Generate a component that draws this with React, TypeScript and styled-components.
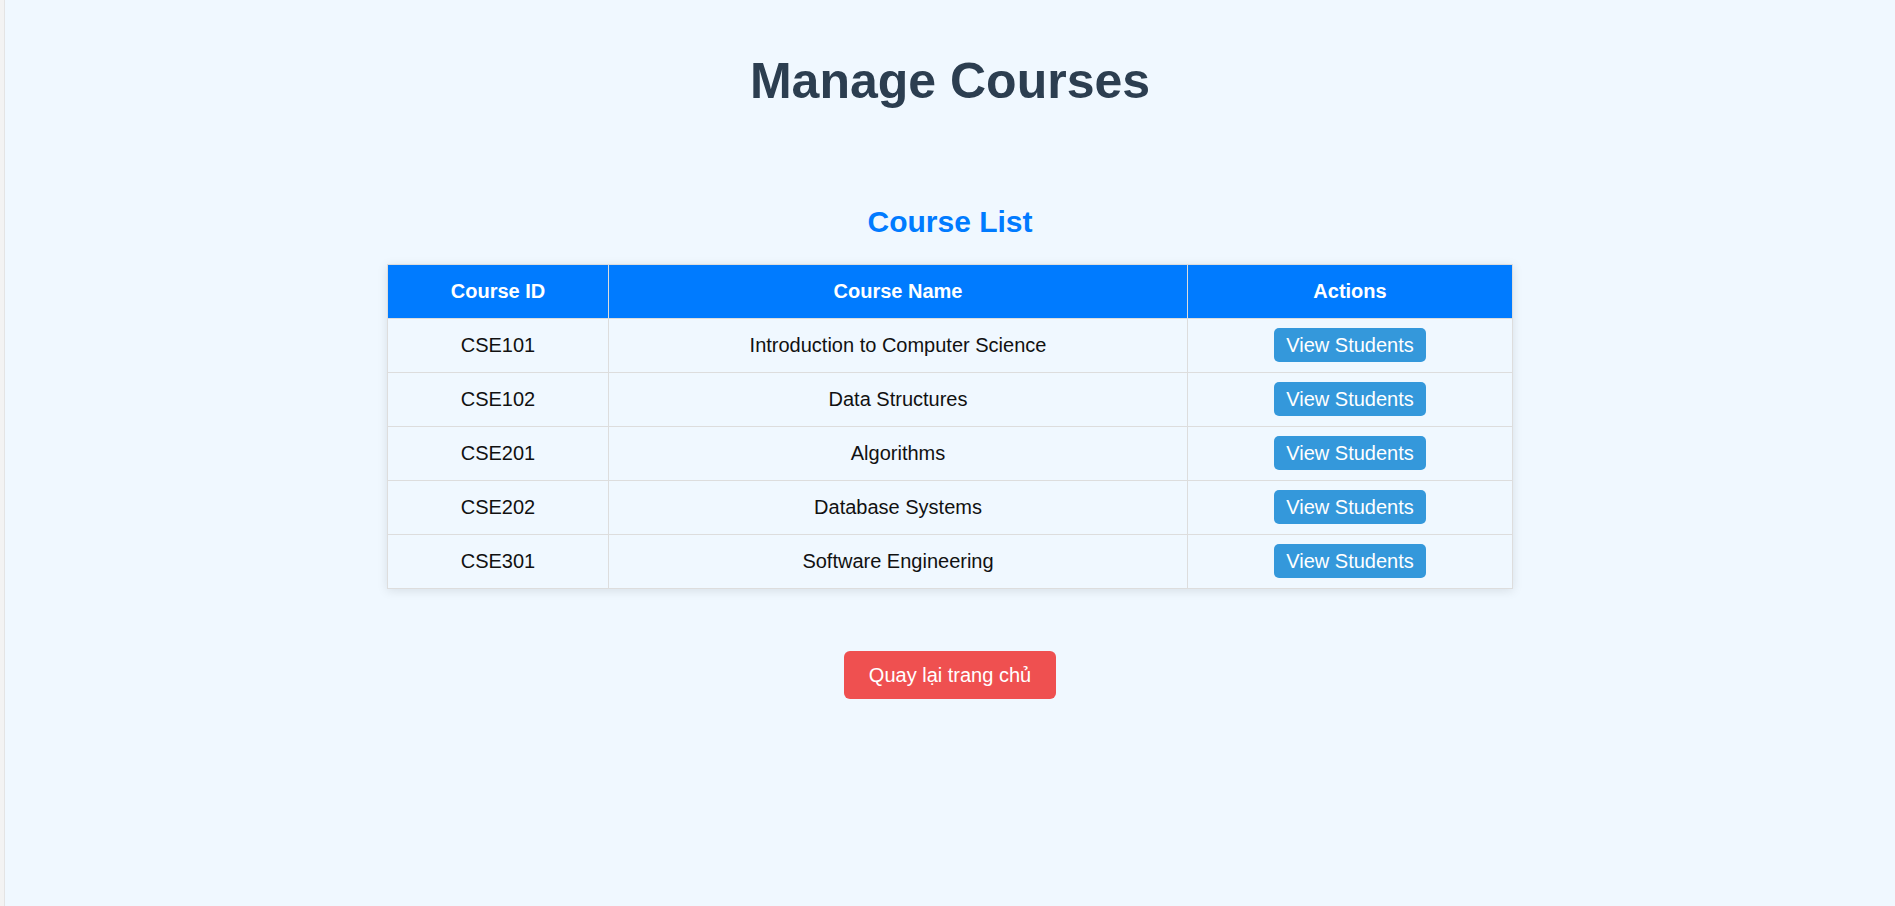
import React from "react";
import styled, { createGlobalStyle } from "styled-components";

const GlobalStyle = createGlobalStyle`
  html, body {
    margin: 0;
    padding: 0;
    background: #f0f8ff;
    font-family: "Liberation Sans", Arial, sans-serif;
  }
  #root {
    min-height: 906px;
  }
`;

const Shell = styled.div`
  display: flex;
  min-height: 906px;
`;

const EdgeStrip = styled.div`
  width: 4px;
  flex: 0 0 4px;
  background: #f3f3f3;
  border-right: 1px solid #e4e4e4;
`;

const Main = styled.main`
  flex: 1;
  display: flex;
  flex-direction: column;
  align-items: center;
  background: #f0f8ff;
`;

const Title = styled.h1`
  margin: 52px 0 0;
  font-size: 50px;
  line-height: 58px;
  font-weight: 700;
  color: #2c3e50;
`;

const SectionTitle = styled.h2`
  margin: 95px 0 25px;
  font-size: 30px;
  line-height: 34px;
  font-weight: 700;
  color: #007bff;
`;

const Table = styled.table`
  width: 1125px;
  table-layout: fixed;
  border-collapse: collapse;
  border: 1px solid #ddd;
  box-shadow: 0 2px 10px rgba(0, 0, 0, 0.1);
  background: #f0f8ff;
`;

const HeadCell = styled.th<{ $w: number }>`
  box-sizing: border-box;
  width: ${(p) => p.$w}px;
  background: #007bff;
  color: #fff;
  font-size: 20px;
  line-height: 23px;
  font-weight: 700;
  padding: 15px 12px;
  border: 1px solid #ddd;
  text-align: center;
`;

const Cell = styled.td`
  font-size: 20px;
  line-height: 23px;
  color: #111;
  padding: 9px 12px 10px;
  border: 1px solid #ddd;
  text-align: center;
  height: 34px;
`;

const ViewButton = styled.button`
  font-family: "Liberation Sans", Arial, sans-serif;
  font-size: 20px;
  line-height: 23px;
  color: #fff;
  background: #3498db;
  border: none;
  border-radius: 5px;
  padding: 5.5px 12.5px;
  cursor: pointer;
  vertical-align: middle;
`;

const HomeButton = styled.button`
  margin-top: 62px;
  font-family: "Liberation Sans", Arial, sans-serif;
  font-size: 20px;
  line-height: 23px;
  color: #fff;
  background: #ef5050;
  border: none;
  border-radius: 6px;
  padding: 12.5px 25px;
  cursor: pointer;
`;

const courses = [
  { id: "CSE101", name: "Introduction to Computer Science" },
  { id: "CSE102", name: "Data Structures" },
  { id: "CSE201", name: "Algorithms" },
  { id: "CSE202", name: "Database Systems" },
  { id: "CSE301", name: "Software Engineering" },
];

export default function App() {
  return (
    <>
      <GlobalStyle />
      <Shell>
        <EdgeStrip />
        <Main>
          <Title>Manage Courses</Title>
          <SectionTitle>Course List</SectionTitle>
          <Table>
            <thead>
              <tr>
                <HeadCell $w={221}>Course ID</HeadCell>
                <HeadCell $w={579}>Course Name</HeadCell>
                <HeadCell $w={325}>Actions</HeadCell>
              </tr>
            </thead>
            <tbody>
              {courses.map((c) => (
                <tr key={c.id}>
                  <Cell>{c.id}</Cell>
                  <Cell>{c.name}</Cell>
                  <Cell>
                    <ViewButton>View Students</ViewButton>
                  </Cell>
                </tr>
              ))}
            </tbody>
          </Table>
          <HomeButton>Quay lại trang chủ</HomeButton>
        </Main>
      </Shell>
    </>
  );
}
